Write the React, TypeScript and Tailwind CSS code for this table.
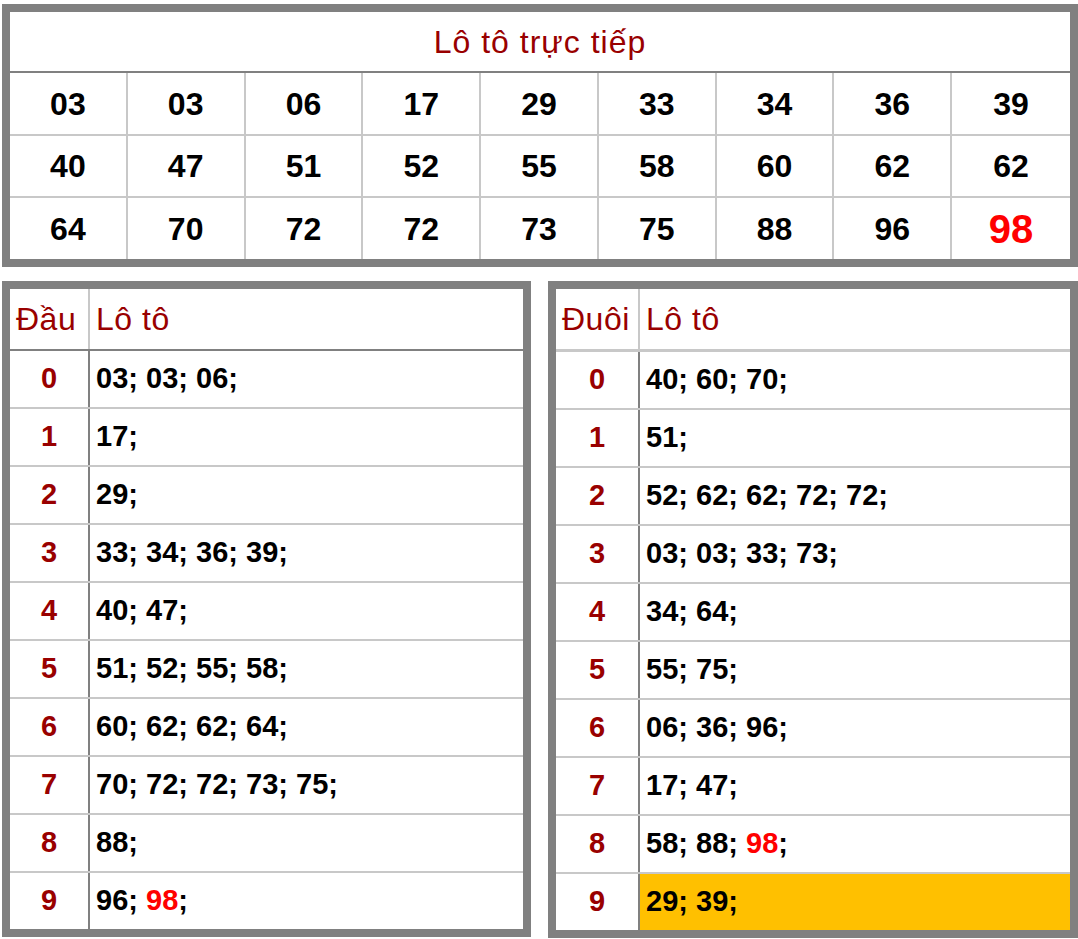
import React from "react";

const FONT = { fontFamily: '"Liberation Sans", Arial, Helvetica, sans-serif' };

const top: string[][] = [
  ["03", "03", "06", "17", "29", "33", "34", "36", "39"],
  ["40", "47", "51", "52", "55", "58", "60", "62", "62"],
  ["64", "70", "72", "72", "73", "75", "88", "96", "98"],
];

const dau: string[][] = [
  ["03", "03", "06"],
  ["17"],
  ["29"],
  ["33", "34", "36", "39"],
  ["40", "47"],
  ["51", "52", "55", "58"],
  ["60", "62", "62", "64"],
  ["70", "72", "72", "73", "75"],
  ["88"],
  ["96", "98"],
];

const duoi: string[][] = [
  ["40", "60", "70"],
  ["51"],
  ["52", "62", "62", "72", "72"],
  ["03", "03", "33", "73"],
  ["34", "64"],
  ["55", "75"],
  ["06", "36", "96"],
  ["17", "47"],
  ["58", "88", "98"],
  ["29", "39"],
];

function List({ items }: { items: string[] }) {
  return (
    <span>
      {items.map((n, i) => (
        <React.Fragment key={i}>
          {i > 0 ? " " : ""}
          <span className={n === "98" ? "text-[#ff0000]" : ""}>{n}</span>;
        </React.Fragment>
      ))}
    </span>
  );
}

function Side({
  title,
  data,
  firstW,
  headerLine,
  highlightLast,
}: {
  title: string;
  data: string[][];
  firstW: string;
  headerLine: string;
  highlightLast?: boolean;
}) {
  return (
    <div className="flex flex-col border-8 border-[#808080] bg-white">
      <div className={`flex h-[60px] ${headerLine}`}>
        <div className={`${firstW} shrink-0 flex items-center pl-[6px] border-r-2 border-[#c8c8c8] text-[32px] text-[#990000] tracking-[0.5px]`}>
          {title}
        </div>
        <div className="flex-1 flex items-center pl-[6px] text-[32px] text-[#990000] tracking-[0.5px]">Lô tô</div>
      </div>
      {data.map((row, i) => {
        const last = i === data.length - 1;
        return (
          <div
            key={i}
            className={`flex ${last ? "h-[56px]" : "h-[56px] border-b-2 border-[#c8c8c8]"} box-content`}
          >
            <div className={`${firstW} shrink-0 flex items-center justify-center border-r-2 border-[#808080] text-[29px] font-bold text-[#990000]`}>
              {i}
            </div>
            <div
              className={`flex-1 flex items-center pl-[6px] text-[29px] font-bold text-black ${
                last && highlightLast ? "bg-[#ffc000]" : ""
              }`}
            >
              <List items={row} />
            </div>
          </div>
        );
      })}
    </div>
  );
}

export default function App() {
  return (
    <div className="w-[1078px] h-[939px] bg-white pt-[4px] pl-[2px] overflow-hidden" style={FONT}>
      <div className="border-8 border-[#808080] bg-white">
        <div className="h-[59px] box-content border-b-2 border-[#808080] flex items-center justify-center text-[32px] text-[#990000] tracking-[1px]">
          Lô tô trực tiếp
        </div>
        {top.map((row, r) => (
          <div
            key={r}
            className={`grid grid-cols-9 box-content ${r === 1 ? "h-[60px]" : "h-[61px]"} ${
              r < 2 ? "border-b-2 border-[#c8c8c8]" : ""
            }`}
          >
            {row.map((n, c) => {
              const red = r === 2 && c === 8;
              return (
                <div
                  key={c}
                  className={`flex items-center justify-center font-bold ${
                    c < 8 ? "border-r-2 border-[#c8c8c8]" : ""
                  } ${red ? "text-[40px] text-[#ff0000]" : "text-[32px] text-black"}`}
                >
                  {n}
                </div>
              );
            })}
          </div>
        ))}
      </div>
      <div className="flex gap-[17px] mt-[14px]">
        <div className="w-[529px]">
          <Side title="Đầu" data={dau} firstW="w-[80px]" headerLine="border-b-2 border-[#808080] box-content h-[59px]" />
        </div>
        <div className="w-[530px]">
          <Side title="Đuôi" data={duoi} firstW="w-[84px]" headerLine="border-b-[3px] border-[#c8c8c8] box-content h-[59px]" highlightLast />
        </div>
      </div>
    </div>
  );
}
